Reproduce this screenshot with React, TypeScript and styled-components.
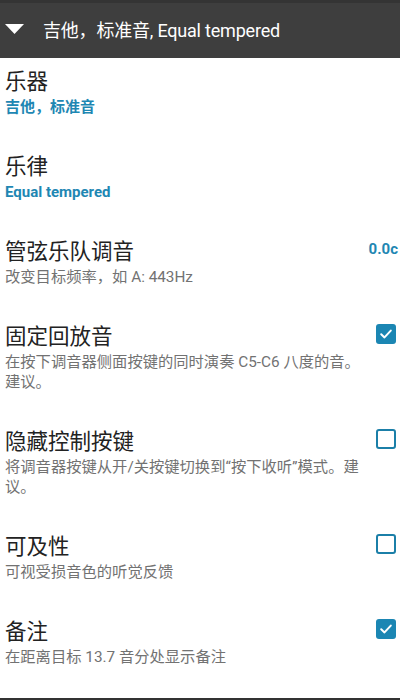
import React from "react";
import styled, { createGlobalStyle } from "styled-components";

const Global = createGlobalStyle`
  html, body { margin: 0; padding: 0; background: #ffffff; }
  body { font-family: Roboto, "Noto Sans CJK SC", sans-serif; }
  * { box-sizing: border-box; }
`;

const Screen = styled.div`
  width: 400px;
  height: 700px;
  display: flex;
  flex-direction: column;
  overflow: hidden;
  background: #fff;
`;

const Header = styled.div`
  height: 58px;
  flex: none;
  display: flex;
  align-items: center;
  gap: 18px;
  padding: 0 0 3px 5px;
  background: #3e3e3e;
  border-top: 3px solid #343434;
  color: #ffffff;
  font-size: 18px;
  font-family: Roboto, "Noto Sans CJK SC", sans-serif;
`;

const HeaderTitle = styled.span`
  letter-spacing: -0.2px;
`;

const List = styled.div`
  flex: 1;
  display: flex;
  flex-direction: column;
`;

const Row = styled.div`
  display: flex;
  flex-direction: column;
  padding: 7px 4px 26px 5px;
`;

const TitleLine = styled.div`
  display: flex;
  align-items: center;
  justify-content: space-between;
  height: 28px;
`;

const Title = styled.span`
  font-size: 21.5px;
  color: #222222;
  font-family: Roboto, "Noto Sans CJK SC", sans-serif;
`;

const Summary = styled.div<{ $accent?: boolean }>`
  margin-top: 4px;
  max-width: 358px;
  font-size: ${(p) => (p.$accent ? "15px" : "15.3px")};
  line-height: 20px;
  font-weight: ${(p) => (p.$accent ? 700 : 400)};
  color: ${(p) => (p.$accent ? "#1e87b3" : "#727272")};
`;

const Value = styled.span`
  font-size: 15px;
  font-weight: 700;
  color: #1e87b3;
  margin-right: -2px;
`;

const Box = styled.span<{ $checked: boolean }>`
  width: 20px;
  height: 20px;
  border-radius: 3px;
  display: inline-flex;
  align-items: center;
  justify-content: center;
  background: ${(p) => (p.$checked ? "#1b86b3" : "transparent")};
  border: ${(p) => (p.$checked ? "none" : "2.5px solid #1b7fa8")};
`;

const Footer = styled.div`
  height: 2px;
  flex: none;
  background: #333333;
`;

const Check = ({ checked }: { checked: boolean }) => (
  <Box $checked={checked}>
    {checked && (
      <svg width="14" height="14" viewBox="0 0 14 14">
        <path d="M2.2 7.3 L5.5 10.4 L11.8 3.6" fill="none" stroke="#fff" strokeWidth="2" strokeLinecap="round" strokeLinejoin="round" />
      </svg>
    )}
  </Box>
);

type Item = {
  title: string;
  summary: string;
  accent?: boolean;
  value?: string;
  checked?: boolean;
};

const items: Item[] = [
  { title: "乐器", summary: "吉他，标准音", accent: true },
  { title: "乐律", summary: "Equal tempered", accent: true },
  { title: "管弦乐队调音", summary: "改变目标频率，如 A: 443Hz", value: "0.0c" },
  { title: "固定回放音", summary: "在按下调音器侧面按键的同时演奏 C5-C6 八度的音。建议。", checked: true },
  { title: "隐藏控制按键", summary: "将调音器按键从开/关按键切换到“按下收听”模式。建议。", checked: false },
  { title: "可及性", summary: "可视受损音色的听觉反馈", checked: false },
  { title: "备注", summary: "在距离目标 13.7 音分处显示备注", checked: true },
];

export default function App() {
  return (
    <>
      <Global />
      <Screen>
        <Header>
          <svg width="20" height="12" viewBox="0 0 20 12">
            <path d="M0 1 L19 1 L9.5 11 Z" fill="#fff" />
          </svg>
          <HeaderTitle>吉他，标准音, Equal tempered</HeaderTitle>
        </Header>
        <List>
          {items.map((it) => (
            <Row key={it.title}>
              <TitleLine>
                <Title>{it.title}</Title>
                {it.value && <Value>{it.value}</Value>}
                {it.checked !== undefined && <Check checked={it.checked} />}
              </TitleLine>
              <Summary $accent={it.accent}>{it.summary}</Summary>
            </Row>
          ))}
        </List>
        <Footer />
      </Screen>
    </>
  );
}
